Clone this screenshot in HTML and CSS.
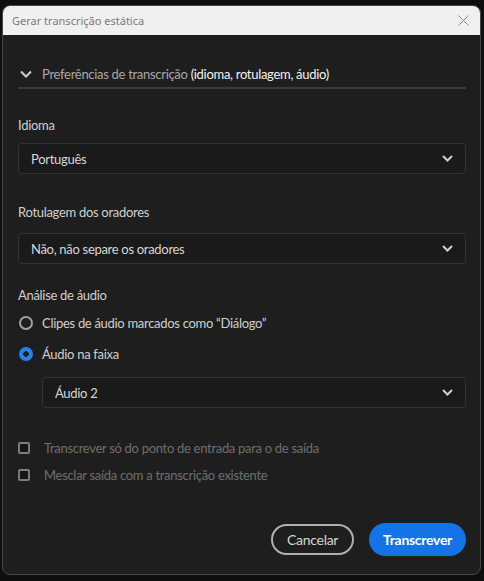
FILE: index.html
```html
<!DOCTYPE html>
<html lang="pt">
<head>
  <meta charset="UTF-8">
  <title>Gerar transcrição estática</title>
  <link rel="stylesheet" href="styles.css">
</head>
<body>
  <div class="window">
    <div class="titlebar">
      <span class="title">Gerar transcrição estática</span>
      <svg class="close" width="11" height="11" viewBox="0 0 11 11"><path d="M0.5 0.5 L10.5 10.5 M10.5 0.5 L0.5 10.5"/></svg>
    </div>

    <div class="content">
      <div class="section-head">
        <svg class="head-chevron" width="12" height="8" viewBox="0 0 12 8"><path d="M1 1.5 L6 6.5 L11 1.5"/></svg>
        <span class="muted">Preferências de transcrição</span>&nbsp;<span class="bright">(idioma, rotulagem, áudio)</span>
      </div>

      <div class="label first">Idioma</div>
      <div class="select">
        <span>Português</span>
        <svg class="chev" width="11" height="7" viewBox="0 0 11 7"><path d="M1 1 L5.5 5.5 L10 1"/></svg>
      </div>

      <div class="label spaced">Rotulagem dos oradores</div>
      <div class="select">
        <span>Não, não separe os oradores</span>
        <svg class="chev" width="11" height="7" viewBox="0 0 11 7"><path d="M1 1 L5.5 5.5 L10 1"/></svg>
      </div>

      <div class="label audio">Análise de áudio</div>
      <div class="radio-row">
        <span class="radio"></span>
        <span>Clipes de áudio marcados como “Diálogo”</span>
      </div>
      <div class="radio-row">
        <span class="radio checked"></span>
        <span>Áudio na faixa</span>
      </div>
      <div class="select indented">
        <span>Áudio 2</span>
        <svg class="chev" width="11" height="7" viewBox="0 0 11 7"><path d="M1 1 L5.5 5.5 L10 1"/></svg>
      </div>

      <div class="check-row first-check">
        <span class="checkbox"></span>
        <span>Transcrever só do ponto de entrada para o de saída</span>
      </div>
      <div class="check-row">
        <span class="checkbox"></span>
        <span>Mesclar saída com a transcrição existente</span>
      </div>

      <div class="footer">
        <button class="btn btn-secondary">Cancelar</button>
        <button class="btn btn-primary">Transcrever</button>
      </div>
    </div>
  </div>
</body>
</html>
```

FILE: styles.css
```css
html, body {
  margin: 0;
  padding: 0;
}
body {
  background: #0e0e0e;
  font-family: Lato, "Noto Sans", sans-serif;
  width: 484px;
  height: 581px;
  overflow: hidden;
}
.window {
  margin: 5px 0 0 2px;
  width: 477px;
  height: 568px;
  border: 1px solid #474747;
  border-radius: 8px;
  background: #1e1e1e;
  display: flex;
  flex-direction: column;
  overflow: hidden;
}
.titlebar {
  height: 29px;
  background: #f0f0f0;
  display: flex;
  align-items: center;
  justify-content: space-between;
  padding: 0 11px 0 9px;
}
.title {
  font-family: "Noto Sans", sans-serif;
  font-size: 11px;
  color: #7a7a7a;
}
.close path {
  stroke: #8a8a8a;
  stroke-width: 1;
  fill: none;
}
.content {
  flex: 1;
  display: flex;
  flex-direction: column;
  padding: 0 14px 18px 15px;
  font-size: 13px;
  letter-spacing: -0.3px;
  color: #cfcfcf;
}
.section-head {
  margin-top: 28px;
  height: 22px;
  line-height: 22px;
  padding-bottom: 2px;
  border-bottom: 2px solid #3a3a3a;
  display: flex;
  align-items: center;
}
.head-chevron {
  margin: 0 10px 0 2px;
}
.head-chevron path, .chev path {
  stroke: #d0d0d0;
  stroke-width: 2;
  fill: none;
}
.muted {
  color: #a8a8a8;
}
.bright {
  color: #f2f2f2;
}
.label {
  line-height: 18px;
  color: #d0d0d0;
}
.label.first {
  margin-top: 27px;
  margin-bottom: 9px;
}
.label.spaced {
  margin-top: 29px;
  margin-bottom: 12px;
}
.label.audio {
  margin-top: 22px;
}
.select {
  height: 29px;
  border: 1px solid #333;
  border-radius: 4px;
  background: #1a1a1a;
  display: flex;
  align-items: center;
  justify-content: space-between;
  padding: 0 12px 0 12px;
  color: #d6d6d6;
}
.select.indented {
  margin-left: 24px;
  margin-top: 11px;
}
.radio-row, .check-row {
  display: flex;
  align-items: center;
  margin-top: 7px;
  height: 24px;
}
.radio {
  width: 10px;
  height: 10px;
  border: 2px solid #a0a0a0;
  border-radius: 50%;
  margin: 0 9px 0 1px;
}
.radio.checked {
  width: 14px;
  height: 14px;
  border: 0;
  background: radial-gradient(circle, #1e1e1e 0 2.5px, #2680eb 3px);
}
.check-row {
  height: 20px;
  color: #6e6e6e;
}
.check-row.first-check {
  margin-top: 30px;
}
.checkbox {
  width: 8px;
  height: 8px;
  border: 2px solid #7a7a7a;
  border-radius: 2px;
  background: #161616;
  margin: 0 14px 0 0;
}
.footer {
  margin-top: auto;
  display: flex;
  justify-content: flex-end;
  align-items: center;
  gap: 15px;
}
.btn {
  font-family: Lato, "Noto Sans", sans-serif;
  font-size: 14px;
  letter-spacing: -0.3px;
  border-radius: 17px;
  cursor: pointer;
}
.btn-secondary {
  height: 31px;
  padding: 0 14px;
  border: 2px solid #b0b0b0;
  background: transparent;
  color: #d6d6d6;
}
.btn-primary {
  height: 33px;
  padding: 0 14px;
  border: 0;
  background: #1473e6;
  color: #ffffff;
  font-weight: bold;
}
```
